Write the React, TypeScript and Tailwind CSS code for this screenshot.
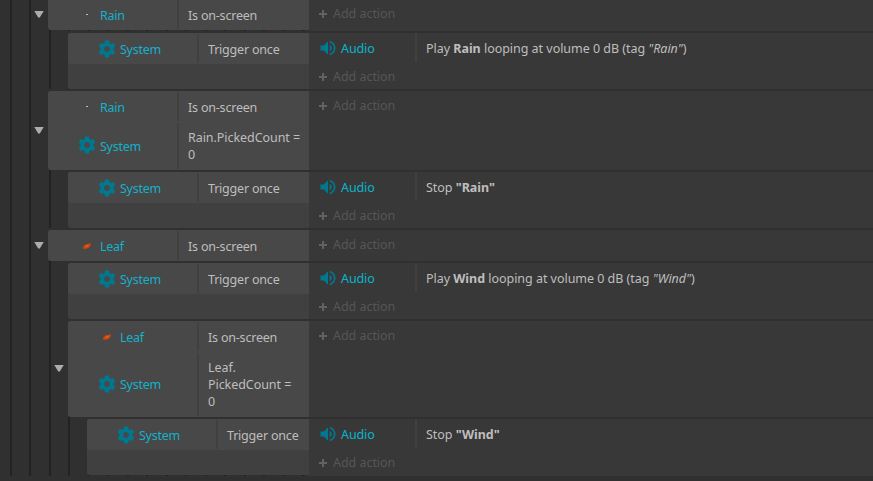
import type { ReactNode } from 'react'
import { MdVolumeUp } from 'react-icons/md'

type Level = 2 | 3 | 4

interface Condition {
  object: 'System' | 'Rain' | 'Leaf'
  text: ReactNode
  wrapped?: boolean
}

interface EventBlock {
  id: number
  level: Level
  toggle?: boolean
  spacer?: boolean
  ticks?: boolean
  conditions: Condition[]
  action?: ReactNode
}

const events: EventBlock[] = [
  { id: 1, level: 2, toggle: true, ticks: true, conditions: [{ object: 'Rain', text: 'Is on-screen' }] },
  {
    id: 2,
    level: 3,
    spacer: true,
    conditions: [{ object: 'System', text: 'Trigger once' }],
    action: <>Play <b>Rain</b> looping at volume 0 dB (tag <i>"Rain"</i>)</>
  },
  {
    id: 3,
    level: 2,
    toggle: true,
    conditions: [
      { object: 'Rain', text: 'Is on-screen' },
      { object: 'System', text: <>Rain.PickedCount =<br />0</>, wrapped: true }
    ]
  },
  {
    id: 4,
    level: 3,
    spacer: true,
    conditions: [{ object: 'System', text: 'Trigger once' }],
    action: <>Stop <b>"Rain"</b></>
  },
  { id: 5, level: 2, toggle: true, conditions: [{ object: 'Leaf', text: 'Is on-screen' }] },
  {
    id: 6,
    level: 3,
    spacer: true,
    conditions: [{ object: 'System', text: 'Trigger once' }],
    action: <>Play <b>Wind</b> looping at volume 0 dB (tag <i>"Wind"</i>)</>
  },
  {
    id: 7,
    level: 3,
    toggle: true,
    conditions: [
      { object: 'Leaf', text: 'Is on-screen' },
      { object: 'System', text: <>Leaf.<br />PickedCount =<br />0</>, wrapped: true }
    ]
  },
  {
    id: 8,
    level: 4,
    spacer: true,
    ticks: true,
    conditions: [{ object: 'System', text: 'Trigger once' }],
    action: <>Stop <b>"Wind"</b></>
  }
]

const gutterWidth = { 2: 'w-12', 3: 'w-[68px]', 4: 'w-[87px]' }

function Guides({ count, toggle }: { count: number; toggle?: boolean }) {
  return (
    <>
      {Array.from({ length: count }, (_, i) => (
        <div
          key={i}
          className={`flex shrink-0 items-center justify-center border-l-2 border-[#222222] ${i % 2 ? 'w-5' : 'w-[19px]'}`}
        >
          {toggle && i === count - 1 && (
            <svg width="10" height="7" viewBox="0 0 10 7" className="mr-0.5 mt-px shrink-0">
              <path d="M0.3 0H9.7L5.8 6.6H4.2Z" fill="#adadad" />
            </svg>
          )}
        </div>
      ))}
    </>
  )
}

function ObjectIcon({ object }: { object: Condition['object'] }) {
  if (object === 'System') {
    return (
      <svg width="18" height="18" viewBox="-9 -9 18 18" fill="#00788f">
        <circle r="4.7" fill="none" stroke="#00788f" strokeWidth="3.4" />
        {[0, 60, 120, 180, 240, 300].map(angle => (
          <path key={angle} d="M-2.7 -5 -2 -8.4H2L2.7 -5Z" transform={`rotate(${angle})`} />
        ))}
      </svg>
    )
  }
  if (object === 'Leaf') {
    return (
      <svg width="10" height="8" viewBox="0 0 10 8">
        <path d="M1 6.4 1.2 4.2 3.6 2.2 8.8 1.2 8.6 3.8 6.2 6.2 2.4 7Z" fill="#c9440f" />
        <path d="M2.6 5.2 4.8 3.4 7.4 2.6 5.6 4.6Z" fill="#fb6a1c" />
      </svg>
    )
  }
  return <div className="mb-px mr-px h-px w-0.5 bg-[#8fd0cc]" />
}

function ConditionRow({ object, text, wrapped }: Condition) {
  return (
    <div className="flex">
      <div className="flex w-[129px] shrink-0 items-center tracking-[-0.25px] text-[#14b1ca]">
        <div className={`ml-[29px] mr-[3px] flex w-5 shrink-0 justify-center ${wrapped ? 'pb-0.5' : ''}`}>
          <ObjectIcon object={object} />
        </div>
        <span className={wrapped ? 'leading-[17px]' : 'pt-0.5 leading-[17px]'}>{object}</span>
      </div>
      <div className="my-px w-0.5 shrink-0 bg-[#404040]" />
      <div
        className={`whitespace-nowrap pl-[9px] leading-[17px] ${
          wrapped ? 'py-[7px] tracking-[-0.06px]' : 'pb-1.5 pt-2 tracking-[-0.2px]'
        }`}
      >
        {text}
      </div>
    </div>
  )
}

function AddAction() {
  return (
    <div className="flex h-7 items-center pl-2.5 pt-0.5 tracking-[-0.04px] text-[#565656]">
      <svg width="8" height="8" viewBox="0 0 8 8" className="mr-1.5">
        <path d="M0 4H8M4 0V8" stroke="#626262" strokeWidth="2" />
      </svg>
      Add action
    </div>
  )
}

function EventRow({ level, toggle, spacer, ticks, conditions, action }: EventBlock) {
  return (
    <div className="flex">
      <div className="flex w-[309px] shrink-0 flex-col">
        <div className="flex">
          <div className={`flex shrink-0 overflow-hidden pl-2.5 ${gutterWidth[level]}`}>
            <Guides count={level} toggle={toggle} />
          </div>
          <div className="min-w-0 grow pt-0.5">
            <div className="overflow-hidden rounded-l-[3px] bg-[#404040]">
              <div className="rounded-bl-[3px] bg-[#484848]">
                {conditions.map((c, i) => (
                  <ConditionRow key={i} {...c} />
                ))}
              </div>
              {spacer && <div className="h-[25px]" />}
            </div>
          </div>
        </div>
        {ticks && (
          <div className="flex h-px overflow-hidden pl-2.5">
            <Guides count={16} />
          </div>
        )}
      </div>
      <div className="min-w-0 grow pt-0.5">
        <div className="h-full bg-[#383838]">
          {action && (
            <div className="-mb-px flex h-[30px]">
              <div className="flex w-[106px] shrink-0 items-center pl-[9px] tracking-[-0.1px] text-[#08b5cf]">
                <MdVolumeUp size={20} className="mr-[3px] text-[#00788f]" />
                <span className="pt-[3px]">Audio</span>
              </div>
              <div className="mb-px w-0.5 shrink-0 bg-[#404040]" />
              <div className="flex items-center whitespace-pre pl-[9px] pt-[3px] tracking-[-0.03px]">
                <span>{action}</span>
              </div>
            </div>
          )}
          <div className={action ? '-mb-px' : ''}>
            <AddAction />
          </div>
        </div>
      </div>
    </div>
  )
}

export default function App() {
  return (
    <div className="h-[481px] w-[873px] overflow-hidden bg-[#303030] font-['Noto_Sans',sans-serif] text-[12.5px] text-[#bebebe]">
      <div className="-mt-[3px]">
        {events.map(event => (
          <EventRow key={event.id} {...event} />
        ))}
      </div>
    </div>
  )
}
